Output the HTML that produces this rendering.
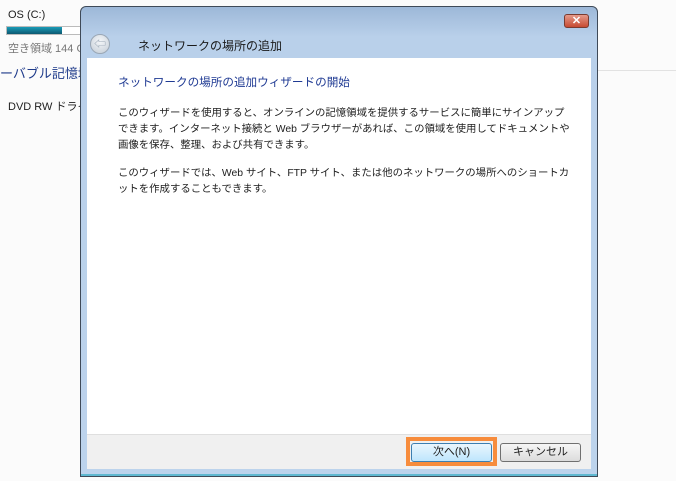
<!DOCTYPE html>
<html><head><meta charset="utf-8"><style>
body{margin:0;width:676px;height:481px;background:#fbfbfb;position:relative;overflow:hidden;font-family:"Liberation Sans","Noto Sans CJK JP",sans-serif;font-size:11px;color:#1e1e1e}
.a{position:absolute}
.t{white-space:nowrap;font-size:10.4px;line-height:16px}
</style></head><body>
<div class="a" style="left:597px;top:70px;width:79px;height:1px;background:#e2e2e2"></div>
<div class="a" style="left:8px;top:9px;font-size:11px">OS (C:)</div>
<div class="a" style="left:6px;top:26px;width:76px;height:9px;background:#fff;border:1px solid #bbb;box-sizing:border-box"></div>
<div class="a" style="left:7px;top:27px;width:55px;height:7px;background:linear-gradient(#1a9cb8,#0c5870)"></div>
<div class="a" style="left:8px;top:40px;color:#777">空き領域 144 G</div>
<div class="a" style="left:0;top:63px;font-size:13px;color:#1e3a8a">ーバブル記憶域</div>
<div class="a" style="left:8px;top:98px">DVD RW ドライ</div>
<!-- window -->
<div class="a" style="left:80px;top:6px;width:518px;height:471px;background:linear-gradient(#9db8d8 0,#b9d0ea 30px,#bcd3ec 100%);border:1px solid #3f4a58;border-radius:6px 6px 0 0;box-sizing:border-box"></div>
<div class="a" style="left:81px;top:474px;width:516px;height:2px;background:#5fb8d0"></div>
<div class="a" style="left:564px;top:14px;width:25px;height:14px;background:linear-gradient(#e59a8a,#c74a32);border:1px solid #7a3b30;border-radius:3px;box-sizing:border-box;color:#fff;font-size:11px;font-weight:bold;text-align:center;line-height:12px">✕</div>
<div class="a" style="left:90px;top:34px;width:20px;height:20px;border-radius:50%;background:radial-gradient(circle at 50% 35%,#f4f6f8,#c3ccd6);border:1px solid #9aa7b5;box-sizing:border-box;color:#9aa7b5;font-size:12px;line-height:18px;text-align:center">⇦</div>
<div class="a" style="left:138px;top:37px;font-size:12px;color:#1a1a1a">ネットワークの場所の追加</div>
<div class="a" style="left:87px;top:58px;width:504px;height:376px;background:#fff"></div>
<div class="a" style="left:87px;top:434px;width:504px;height:35px;background:#f0f0f0;border-top:1px solid #dfdfdf;box-sizing:border-box"></div>
<div class="a" style="left:118px;top:74px;font-size:11.6px;color:#1f3a93;white-space:nowrap">ネットワークの場所の追加ウィザードの開始</div>
<div class="a t" style="left:118px;top:106px">このウィザードを使用すると、オンラインの記憶領域を提供するサービスに簡単にサインアップ<br>できます。インターネット接続と Web ブラウザーがあれば、この領域を使用してドキュメントや<br>画像を保存、整理、および共有できます。</div>
<div class="a t" style="left:118px;top:166px">このウィザードでは、Web サイト、FTP サイト、または他のネットワークの場所へのショートカ<br>ットを作成することもできます。</div>
<div class="a" style="left:406px;top:437px;width:91px;height:29px;background:#f78c3c"></div>
<div class="a" style="left:410px;top:441px;width:83px;height:21px;background:#f0f0f0"></div>
<div class="a" style="left:411px;top:443px;width:81px;height:19px;background:linear-gradient(#eaf6fd,#bee6fd);border:1px solid #3c7fb1;border-radius:3px;box-sizing:border-box;text-align:center;line-height:17px">次へ(N)</div>
<div class="a" style="left:500px;top:443px;width:81px;height:19px;background:linear-gradient(#f6f6f6,#dcdcdc);border:1px solid #707070;border-radius:3px;box-sizing:border-box;text-align:center;line-height:17px">キャンセル</div>
</body></html>
